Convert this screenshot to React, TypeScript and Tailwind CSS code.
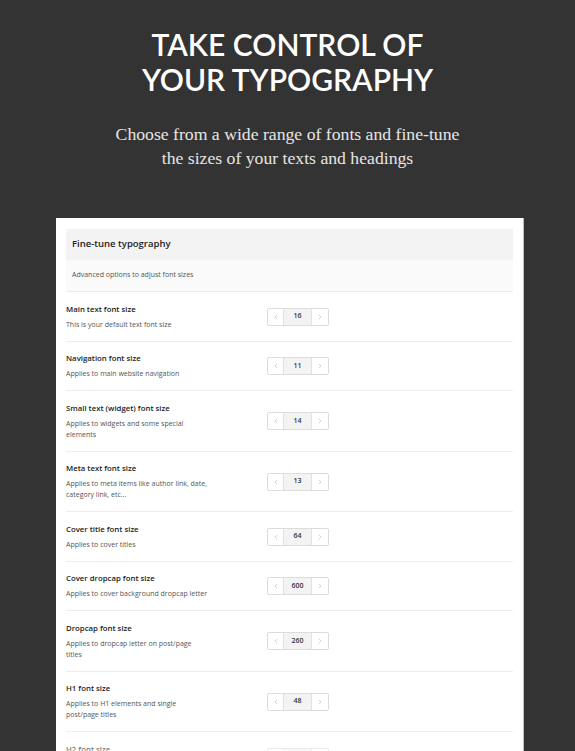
import { ChevronLeft, ChevronRight } from 'lucide-react';

type Campo = { titulo: string; desc: string[]; valor: number };

const campos: Campo[] = [
  { titulo: 'Main text font size', desc: ['This is your default text font size'], valor: 16 },
  { titulo: 'Navigation font size', desc: ['Applies to main website navigation'], valor: 11 },
  { titulo: 'Small text (widget) font size', desc: ['Applies to widgets and some special', 'elements'], valor: 14 },
  { titulo: 'Meta text font size', desc: ['Applies to meta items like author link, date,', 'category link, etc...'], valor: 13 },
  { titulo: 'Cover title font size', desc: ['Applies to cover titles'], valor: 64 },
  { titulo: 'Cover dropcap font size', desc: ['Applies to cover background dropcap letter'], valor: 600 },
  { titulo: 'Dropcap font size', desc: ['Applies to dropcap letter on post/page', 'titles'], valor: 260 },
  { titulo: 'H1 font size', desc: ['Applies to H1 elements and single', 'post/page titles'], valor: 48 },
  { titulo: 'H2 font size', desc: ['Applies to H2 elements'], valor: 40 },
];

function Spinner({ valor }: { valor: number }) {
  return (
    <div className="flex h-[18px] w-[62px] overflow-hidden rounded-[2px] border border-[#dcdcdc] bg-white">
      <div className="flex w-[16px] items-center justify-center border-r border-[#e2e2e2] text-[#a8a8a8]">
        <ChevronLeft size={8} strokeWidth={1.5} />
      </div>
      <div className="flex flex-1 items-center justify-center bg-[#f3f3f3] text-[7px] font-semibold text-[#333]">
        {valor}
      </div>
      <div className="flex w-[17px] items-center justify-center border-l border-[#e2e2e2] text-[#a8a8a8]">
        <ChevronRight size={8} strokeWidth={1.5} />
      </div>
    </div>
  );
}

export default function App() {
  return (
    <div className="h-[751px] overflow-hidden bg-[#333333]">
      <div className="pt-[27px] text-center">
        <h1 className="text-[30px] font-semibold leading-[35px] text-white" style={{ fontFamily: 'Lato, sans-serif' }}>
          TAKE CONTROL OF
          <br />
          YOUR TYPOGRAPHY
        </h1>
        <p className="mt-[25px] text-[17.7px] leading-[24px] text-[#e6e6e6]" style={{ fontFamily: '"Liberation Serif", serif' }}>
          Choose from a wide range of fonts and fine-tune
          <br />
          the sizes of your texts and headings
        </p>
      </div>

      <div
        className="relative ml-[56px] mt-[48px] w-[468px] border-r border-[#bdbdbd] bg-white px-[10px] pt-[11px]"
        style={{ fontFamily: '"Open Sans", "Noto Sans", sans-serif' }}
      >
        <div className="flex h-[31px] items-center bg-[#f3f3f3] pl-[6px] text-[9.5px] font-semibold text-[#222]">
          Fine-tune typography
        </div>
        <div className="flex h-[32px] items-center border-b border-[#ececec] bg-[#fafafa] pl-[6px] text-[7px] text-[#555]">
          Advanced options to adjust font sizes
        </div>

        {campos.map((c) => (
          <div key={c.titulo} className="flex items-center border-b border-[#ededed] pb-[11px] pt-[11.5px]">
            <div className="w-[201px]">
              <div className="text-[7.8px] font-semibold leading-[11px] text-[#222]">{c.titulo}</div>
              <div className="mt-[4px] text-[7px] leading-[11px] text-[#555]">
                {c.desc.map((l) => (
                  <div key={l} className="whitespace-nowrap">{l}</div>
                ))}
              </div>
            </div>
            <Spinner valor={c.valor} />
          </div>
        ))}

        {/* fade at the bottom edge */}
        <div className="pointer-events-none absolute left-0 right-0 top-[521px] h-[12px] bg-gradient-to-b from-white/0 to-white/50" />
      </div>
    </div>
  );
}
